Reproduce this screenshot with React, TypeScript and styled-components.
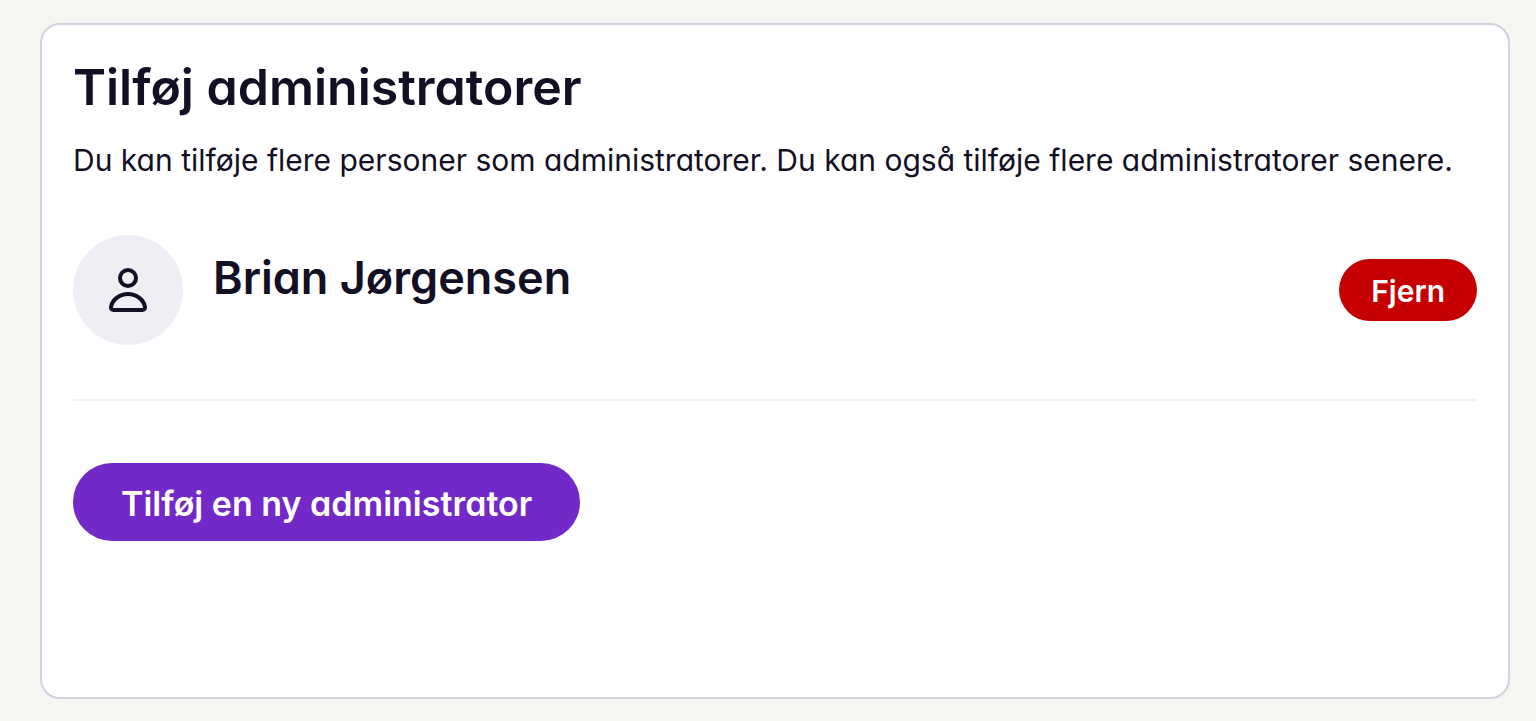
import React from "react";
import styled, { createGlobalStyle } from "styled-components";

const GlobalStyle = createGlobalStyle`
  * { box-sizing: border-box; }
  body {
    margin: 0;
    background: #f5f6f1;
    color: #130f25;
    font-family: Inter, "Liberation Sans", sans-serif;
    /* single-storey "a" */
    font-feature-settings: "cv11" 1;
  }
`;

const Page = styled.main`
  min-height: 100vh;
  padding: 23px 26px 22px 40px;
  display: flex;
`;

const Card = styled.section`
  flex: 1;
  min-width: 0;
  padding: 32px 31px;
  background: #fff;
  border: 2px solid #d2d1df;
  border-radius: 20px;
`;

const Title = styled.h1`
  margin: 0;
  font-size: 50px;
  line-height: 60px;
  font-weight: 600;
`;

const Intro = styled.p`
  margin: 22px 0 0;
  font-size: 30px;
  line-height: 42px;
`;

const AdminList = styled.ul`
  margin: 0;
  padding: 0;
  list-style: none;
`;

const AdminRow = styled.li`
  display: flex;
  align-items: center;
  gap: 30px;
  padding: 54px 0;
  border-bottom: 2px solid #f1f1f5;
`;

const Avatar = styled.span`
  display: flex;
  flex: none;
  align-items: center;
  justify-content: center;
  width: 110px;
  height: 110px;
  border-radius: 50%;
  background: #efeef4;
`;

const AdminName = styled.h2`
  flex: 1;
  margin: 0;
  padding-bottom: 24px;
  font-size: 45px;
  line-height: 56px;
  font-weight: 600;
`;

const Button = styled.button<{ $kind: "primary" | "danger" }>`
  flex: none;
  border: 0;
  border-radius: 40px;
  color: #fff;
  font-family: inherit;
  font-feature-settings: inherit;
  font-weight: 600;
  white-space: nowrap;
  cursor: pointer;
  background: ${(p) => (p.$kind === "primary" ? "#7229c7" : "#c60000")};
  font-size: ${(p) => (p.$kind === "primary" ? 34 : 30)}px;
  height: ${(p) => (p.$kind === "primary" ? 78 : 62)}px;
  padding: 2px ${(p) => (p.$kind === "primary" ? 48 : 32)}px 0;
`;

const Actions = styled.div`
  padding-top: 62px;
`;

function PersonIcon() {
  return (
    <svg width="48" height="48" viewBox="0 0 48 48" fill="none" stroke="#130f25" strokeWidth="4" aria-hidden="true">
      <circle cx="24" cy="12" r="8" />
      <path d="M9.500 44h29a2.500 2.500 0 0 0 2.500-2.700C40.300 34.500 33 28 24 28S7.700 34.500 7 41.300A2.500 2.500 0 0 0 9.500 44z" />
    </svg>
  );
}

export default function App() {
  return (
    <>
      <GlobalStyle />
      <Page>
        <Card>
          <Title>Tilføj administratorer</Title>
          <Intro>Du kan tilføje flere personer som administratorer. Du kan også tilføje flere administratorer senere.</Intro>
          <AdminList>
            <AdminRow>
              <Avatar><PersonIcon /></Avatar>
              <AdminName>Brian Jørgensen</AdminName>
              <Button type="button" $kind="danger">Fjern</Button>
            </AdminRow>
          </AdminList>
          <Actions>
            <Button type="button" $kind="primary">Tilføj en ny administrator</Button>
          </Actions>
        </Card>
      </Page>
    </>
  );
}
